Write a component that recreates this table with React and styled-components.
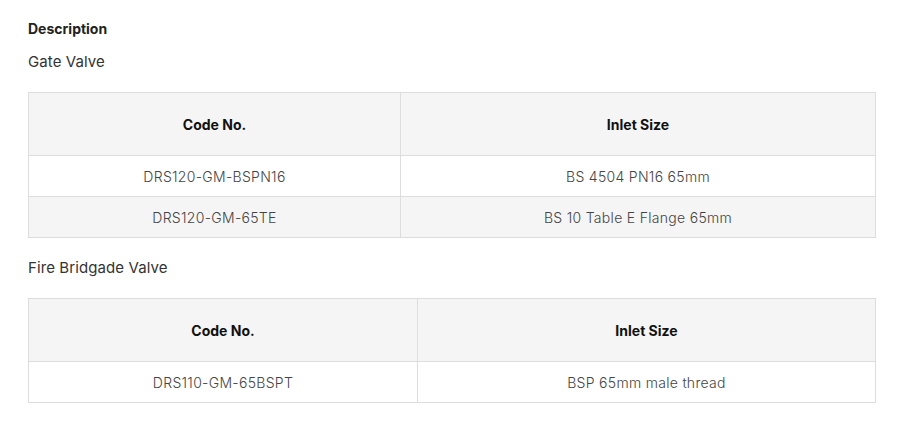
import React from 'react';
import styled, { createGlobalStyle } from 'styled-components';

const GlobalStyle = createGlobalStyle`
	body {
		margin: 0;
		background: #fff;
		font-family: Inter, "Open Sans", sans-serif;
		color: #333;
	}
`;

const Page = styled.div`
	padding: 20px 24px 20px 28px;
`;

const Label = styled.div`
	font-size: 14px;
	font-weight: 700;
	color: #222;
	line-height: 18px;
`;

const Heading = styled.p`
	margin: 14px 0 20px;
	font-size: 15px;
	line-height: 20px;
	color: #333;
	letter-spacing: 0.1px;
`;

const Table = styled.table`
	width: 100%;
	border-collapse: collapse;
	margin-bottom: 20px;
	font-size: 14px;
`;

const HeadCell = styled.th`
	width: ${p => p.width || 'auto'};
	height: 62px;
	padding: 0 10px;
	background: #f5f5f5;
	border: 1px solid #dddddd;
	font-weight: 700;
	color: #111;
	text-align: center;
`;

const Row = styled.tr`
	background: ${p => (p.striped ? '#f5f5f5' : '#fff')};
`;

const Cell = styled.td`
	height: 40px;
	padding: 0 10px;
	border: 1px solid #dddddd;
	text-align: center;
	color: #444;
	font-weight: 300;
	letter-spacing: 0.3px;
`;

const sections = [
	{
		title: 'Gate Valve',
		firstCol: '351px',
		rows: [
			['DRS120-GM-BSPN16', 'BS 4504 PN16 65mm'],
			['DRS120-GM-65TE', 'BS 10 Table E Flange 65mm'],
		],
	},
	{
		title: 'Fire Bridgade Valve',
		firstCol: '368px',
		rows: [['DRS110-GM-65BSPT', 'BSP 65mm male thread']],
	},
];

export default function App() {
	return (
		<Page>
			<GlobalStyle />
			<Label>Description</Label>
			{sections.map(section => (
				<React.Fragment key={section.title}>
					<Heading>{section.title}</Heading>
					<Table>
						<thead>
							<tr>
								<HeadCell width={section.firstCol}>Code No.</HeadCell>
								<HeadCell>Inlet Size</HeadCell>
							</tr>
						</thead>
						<tbody>
							{section.rows.map((row, i) => (
								<Row key={row[0]} striped={i % 2 === 1}>
									<Cell>{row[0]}</Cell>
									<Cell>{row[1]}</Cell>
								</Row>
							))}
						</tbody>
					</Table>
				</React.Fragment>
			))}
		</Page>
	);
}
